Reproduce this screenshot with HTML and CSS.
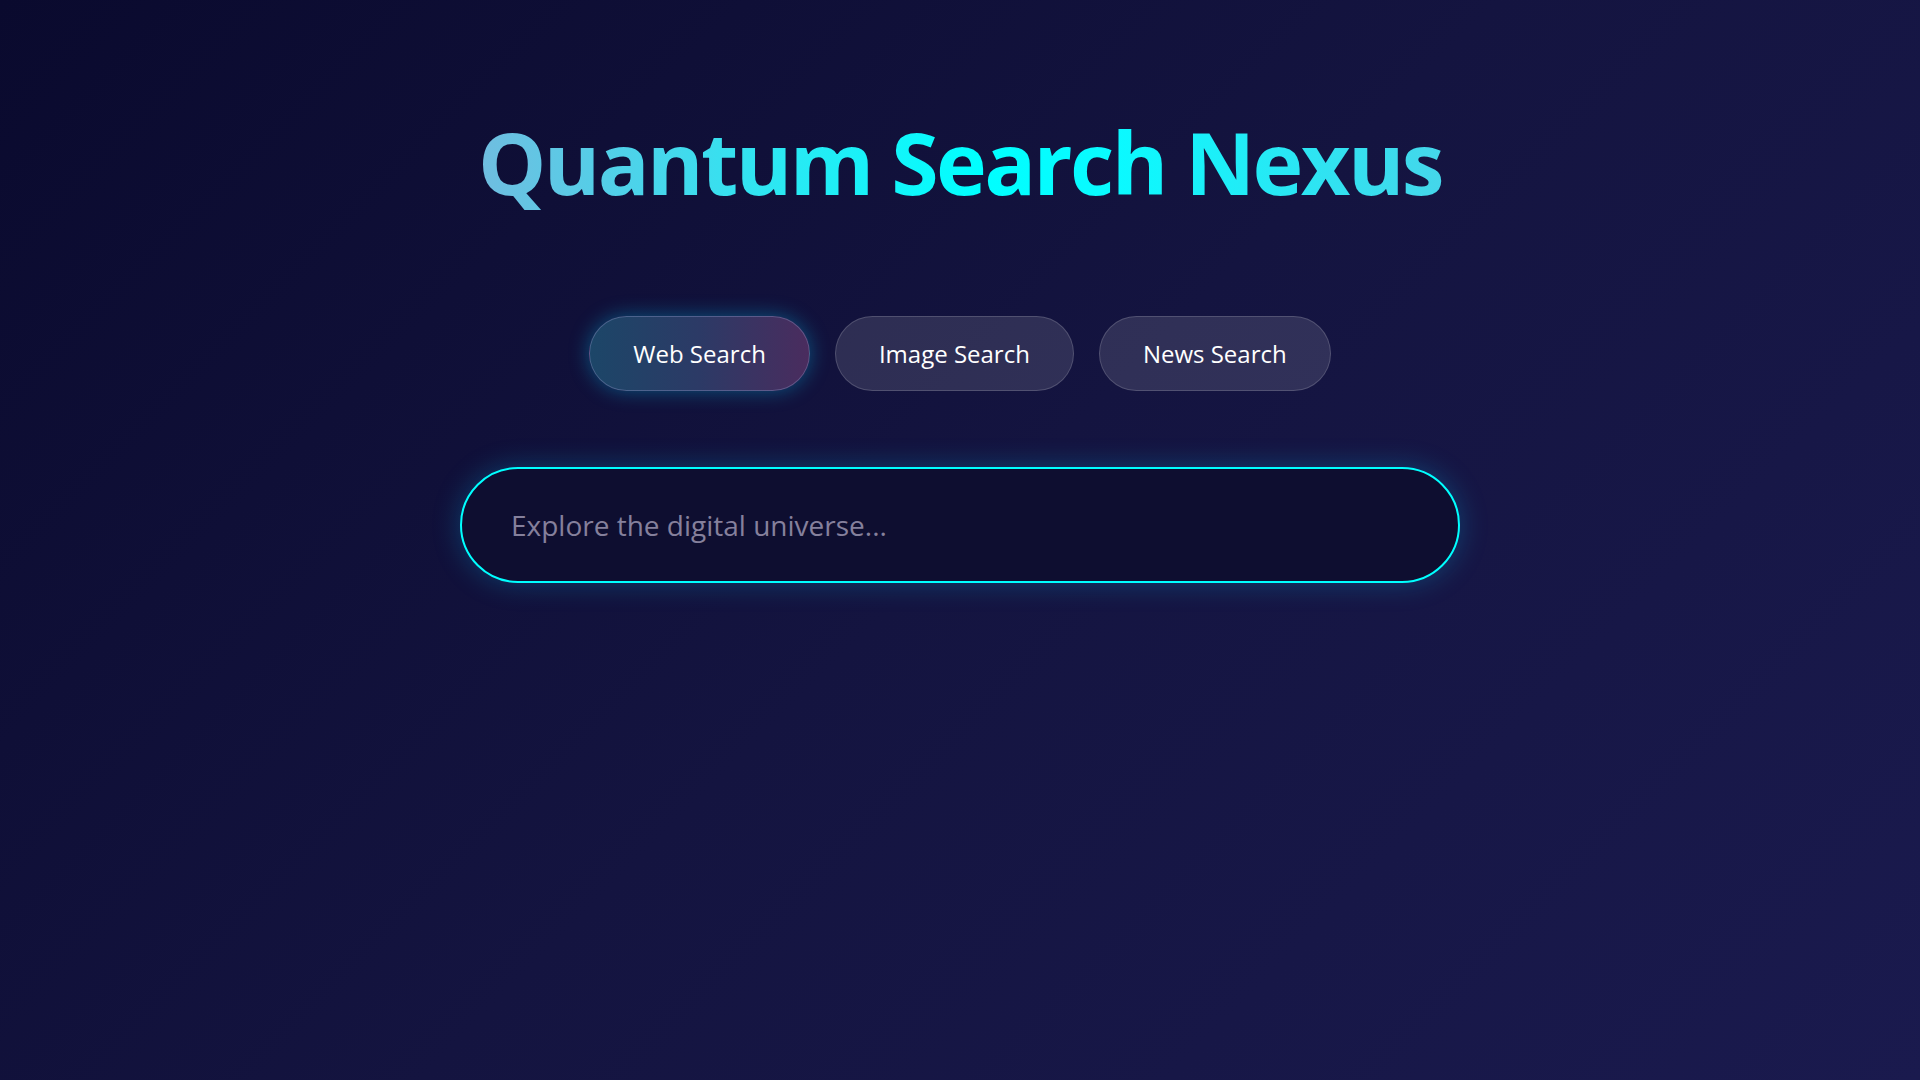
FILE: index.html
```html
<!DOCTYPE html>
<html lang="en">
<head>
<meta charset="utf-8">
<title>Quantum Search Nexus</title>
<link rel="stylesheet" href="styles.css">
</head>
<body>
<main class="page">
  <h1 class="title">Quantum Search Nexus</h1>
  <nav class="modes">
    <button class="mode mode-active" type="button">Web Search</button>
    <button class="mode" type="button">Image Search</button>
    <button class="mode" type="button">News Search</button>
  </nav>
  <div class="search">
    <input class="search-input" type="text" placeholder="Explore the digital universe..." autofocus>
  </div>
</main>
</body>
</html>
```

FILE: styles.css
```css
html, body {
  margin: 0;
  padding: 0;
}

body {
  min-height: 100vh;
  background: linear-gradient(135deg, #0a0a2e 0%, #141440 50%, #1a1a4e 100%);
  font-family: "Open Sans", "Noto Sans", sans-serif;
  color: #ffffff;
}

.page {
  display: flex;
  flex-direction: column;
  align-items: center;
  padding-top: 110px;
}

.title {
  margin: 0;
  font-size: 86px;
  line-height: 1.2;
  font-weight: 700;
  letter-spacing: -2.6px;
  background: linear-gradient(90deg, #70bde0 0%, #2ee6f2 30%, #00ffff 52%, #0afaff 66%, #45d6ea 100%);
  -webkit-background-clip: text;
  background-clip: text;
  color: transparent;
}

.modes {
  display: flex;
  gap: 25px;
  margin-top: 103px;
}

.mode {
  height: 75px;
  padding: 0 43px;
  border-radius: 40px;
  border: 1px solid rgba(255, 255, 255, 0.16);
  background: rgba(255, 255, 255, 0.12);
  color: #ffffff;
  font-family: "Open Sans", "Noto Sans", sans-serif;
  font-size: 24px;
  cursor: pointer;
}

.mode-active {
  background: linear-gradient(90deg, #1c4668 0%, #2c3a66 50%, #4a2c5e 100%);
  border-color: rgba(140, 150, 200, 0.4);
  box-shadow: 0 0 20px rgba(0, 210, 255, 0.35);
}

.search {
  width: 1000px;
  margin-top: 76px;
}

.search-input {
  box-sizing: border-box;
  width: 100%;
  height: 116px;
  padding: 0 49px;
  border: 2px solid #00ffff;
  border-radius: 58px;
  background: #0e0e30;
  color: #ffffff;
  font-family: "Open Sans", "Noto Sans", sans-serif;
  font-size: 28px;
  outline: none;
  box-shadow: 0 0 28px rgba(0, 200, 255, 0.25);
  caret-color: #ffffff;
}

.search-input::placeholder {
  color: #85809c;
}
```
